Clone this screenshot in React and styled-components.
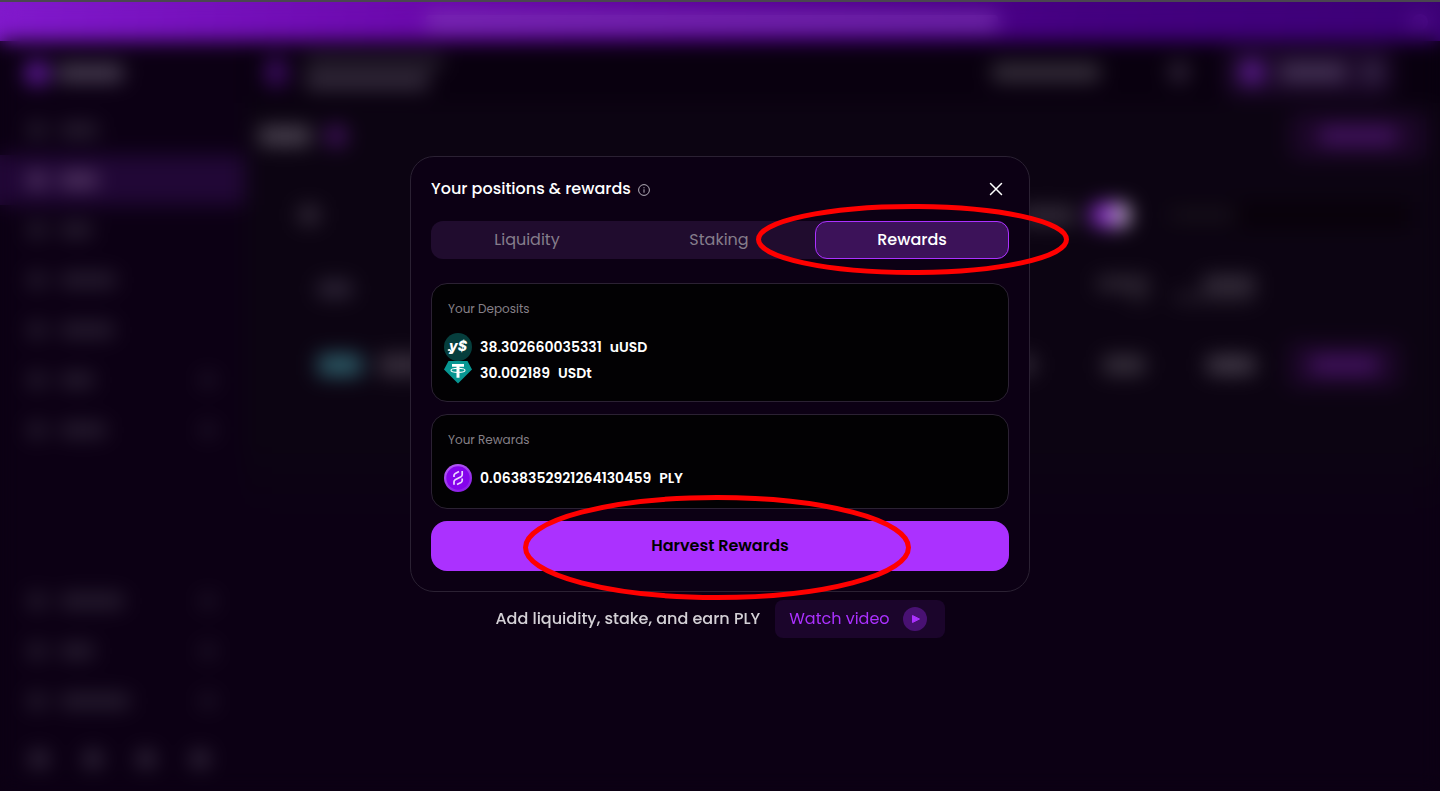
import React from "react";
import styled, { createGlobalStyle, css } from "styled-components";

const GlobalStyle = createGlobalStyle`
  *, *::before, *::after { box-sizing: border-box; }
  body {
    margin: 0;
    background: #0c0014;
    color: #fff;
    font-family: Poppins, Inter, "Liberation Sans", sans-serif;
    font-size: 16px;
    line-height: 24px;
  }
  button { font: inherit; color: inherit; border: 0; padding: 0; background: none; cursor: pointer; }
  h2, h3, p, ul, dl { margin: 0; padding: 0; list-style: none; }
`;

/* ---------- dimmed page behind the dialog ---------- */

const Page = styled.div`
  min-height: 100vh;
  display: flex;
  flex-direction: column;
  border-top: 2px solid #4a4650;
`;

const Banner = styled.div`
  display: flex;
  align-items: center;
  justify-content: center;
  height: 39px;
  padding: 0 12px;
  background: linear-gradient(100deg, #8119cc 0%, #6a08ab 30%, #5a0099 50%, #440080 75%, #3c0076 100%);
`;

const BannerClose = styled.span`
  width: 16px;
  height: 16px;
  border-radius: 50%;
  background: #5a1596;
`;

const Ghost = styled.span`
  flex: none;
  width: ${(p) => p.$w}px;
  height: ${(p) => p.$h || 14}px;
  border-radius: ${(p) => (p.$round ? "50%" : "4px")};
  background: ${(p) => p.$c};
`;

const Columns = styled.div`
  flex: 1;
  display: flex;
`;

const Sidebar = styled.nav`
  width: 245px;
  flex: none;
  display: flex;
  flex-direction: column;
  padding-bottom: 11px;
`;

const Brand = styled.div`
  display: flex;
  align-items: center;
  gap: 8px;
  height: 64px;
  padding-left: 25px;
`;

const NavItem = styled.div`
  display: flex;
  align-items: center;
  gap: 14px;
  height: 50px;
  padding: 0 30px 0 28px;
  ${(p) => p.$active && css`background: #210736;`}
`;

const Spacer = styled.span`
  flex: 1;
`;

const Socials = styled.div`
  display: flex;
  justify-content: space-between;
  padding: 24px 36px 12px 30px;
`;

const Main = styled.div`
  flex: 1;
  min-width: 0;
  display: flex;
  flex-direction: column;
  background: linear-gradient(#0c0412 0, #0c0412 400px, #0c0014 480px);
`;

const TopBar = styled.div`
  display: flex;
  align-items: center;
  height: 62px;
  padding: 0 46px 0 20px;
  background: #09000f;
`;

const PriceLines = styled.div`
  flex: 1;
  display: flex;
  flex-direction: column;
  gap: 6px;
  padding-left: 18px;
`;

const Balance = styled.span`
  display: flex;
  margin-right: 68px;
`;

const Wallet = styled.div`
  display: flex;
  align-items: center;
  gap: 16px;
  height: 50px;
  margin-left: 34px;
  padding: 0 12px 0 16px;
  border-radius: 12px;
  background: #1b0828;
`;

const TitleBar = styled.div`
  display: flex;
  align-items: center;
  gap: 14px;
  height: 66px;
  padding: 0 14px;
`;

const GhostButton = styled.span`
  display: flex;
  align-items: center;
  justify-content: center;
  width: ${(p) => p.$w}px;
  height: 46px;
  border-radius: 8px;
  background: #1b0627;
`;

const FilterBar = styled.div`
  display: flex;
  align-items: center;
  height: 92px;
  padding: 0 30px 0 54px;
`;

const Toggle = styled.span`
  display: flex;
  justify-content: flex-end;
  width: 40px;
  height: 24px;
  margin: 0 40px 0 14px;
  border-radius: 12px;
  background: #8a30c8;
`;

const Knob = styled.span`
  width: 18px;
  height: 24px;
  border-radius: 50%;
  background: #cbb8d8;
`;

const SearchField = styled.span`
  display: flex;
  align-items: center;
  width: 240px;
  height: 26px;
  background: #08010a;
`;

const TableRow = styled.div`
  display: flex;
  align-items: center;
  gap: 16px;
  height: ${(p) => p.$h}px;
  padding: 0 40px 0 73px;
`;

const Cell = styled.span`
  display: flex;
  flex-direction: column;
  align-items: flex-end;
  gap: 2px;
  width: ${(p) => p.$w}px;
`;

/* ---------- dialog ---------- */

const Overlay = styled.div`
  position: fixed;
  inset: 2px 0 0;
  display: flex;
  flex-direction: column;
  align-items: center;
  justify-content: center;
  gap: 8px;
  padding-top: 1px;
  backdrop-filter: blur(10px);
`;

const Dialog = styled.section`
  position: relative;
  width: 100%;
  max-width: 620px;
  padding: 16px 20px 20px;
  border: 1px solid #2b2133;
  border-radius: 24px;
  background: #0c0014;
`;

const DialogHeader = styled.header`
  display: flex;
  align-items: center;
  height: 32px;
  margin-bottom: 16px;
`;

const DialogTitle = styled.h2`
  font-size: 16px;
  line-height: 24px;
  font-weight: 500;
`;

const InfoButton = styled.button`
  display: flex;
  margin: 2px 0 0 7px;
  color: #b3adb8;
`;

const CloseButton = styled.button`
  display: flex;
  align-items: center;
  justify-content: center;
  width: 26px;
  height: 26px;
  margin-left: auto;
`;

const Tabs = styled.div`
  display: flex;
  height: 38px;
  margin-bottom: 24px;
  border-radius: 12px;
  background: #200c2e;
`;

const Tab = styled.button`
  flex: 1;
  border-radius: 12px;
  color: #857d8b;
  ${(p) =>
    p.$active &&
    css`
      color: #fff;
      font-weight: 500;
      background: #3c1259;
      border: 1px solid #ab31ff;
    `}
`;

const Card = styled.section`
  padding: 16px 12px;
  margin-bottom: 12px;
  border: 1px solid #2b2133;
  border-radius: 16px;
  background: #020103;
`;

const CardLabel = styled.h3`
  padding-left: 4px;
  margin-bottom: 15px;
  font-size: 12px;
  line-height: 18px;
  font-weight: 400;
  color: #868088;
`;

const TokenRow = styled.li`
  display: flex;
  align-items: center;
  gap: 8px;
  height: 28px;
  font-size: 14px;
  line-height: 20px;
  font-weight: 600;
  & + & { height: 24px; }
  svg { flex: none; }
`;

const HarvestButton = styled.button`
  display: block;
  width: 100%;
  height: 50px;
  border-radius: 16px;
  background: #ab31ff;
  color: #000;
  font-weight: 600;
`;

const Help = styled.div`
  display: flex;
  align-items: center;
  gap: 15px;
`;

const HelpText = styled.p`
  font-weight: 500;
  color: #d4d0d6;
`;

const WatchButton = styled.button`
  display: flex;
  align-items: center;
  gap: 13px;
  height: 38px;
  padding: 0 18px 0 14px;
  border-radius: 8px;
  background: #1b052b;
  color: #ab31ff;
`;

const Mark = styled.svg`
  position: absolute;
  left: ${(p) => p.$x}px;
  top: ${(p) => p.$y}px;
  pointer-events: none;
`;

/* ---------- drawings ---------- */

function UusdIcon() {
  return (
    <svg width="28" height="28" viewBox="0 0 28 28" aria-hidden="true">
      <circle cx="14" cy="14" r="14" fill="#063e3d" />
      <text x="14" y="18" textAnchor="middle" fontFamily="Inter, sans-serif" fontSize="14" fontWeight="800" fontStyle="italic" fill="#fff">
        y$
      </text>
      <path d="M4 17.500q1.500-1.500 2.500.5t2.500 1.500" fill="none" stroke="#fff" strokeWidth="1.600" />
    </svg>
  );
}

function UsdtIcon() {
  return (
    <svg width="28" height="24" viewBox="0 0 28 24" aria-hidden="true">
      <path d="M4.500 0h19L28 8.500 14 22.500 0 8.500z" fill="#079692" />
      <path d="M8 3h12v2.700h-4.500v11h-3v-11H8z" fill="#fff" />
      <ellipse cx="14" cy="9.300" rx="7" ry="2.100" fill="none" stroke="#fff" strokeWidth="1.100" />
    </svg>
  );
}

function PlyIcon() {
  return (
    <svg width="28" height="28" viewBox="0 0 28 28" aria-hidden="true">
      <defs>
        <linearGradient id="plyRim" x1="0.2" y1="0" x2="0.7" y2="1">
          <stop offset="0" stopColor="#b45cf5" />
          <stop offset="1" stopColor="#8a1ae6" />
        </linearGradient>
      </defs>
      <circle cx="14" cy="14" r="14" fill="url(#plyRim)" />
      <circle cx="14" cy="14" r="11.700" fill="#8503ec" />
      <g fill="none" stroke="#ecd6ff" strokeWidth="1.700">
        <path d="M10 13v-1.500c0-1 .4-1.500 1.300-2L15 7.600" />
        <path d="M18.200 7v3.800c0 1-.3 1.500-1.200 2l-5.800 3c-.9.500-1.200 1-1.200 2v3" />
        <path d="M18.200 14.500v2c0 1-.3 1.500-1.200 2l-4 2.100" />
      </g>
    </svg>
  );
}

function InfoIcon() {
  return (
    <svg width="12" height="12" viewBox="0 0 12 12" fill="none" stroke="currentColor" aria-hidden="true">
      <circle cx="6" cy="6" r="5.400" />
      <path d="M6 5.300v3.400M6 3.200v1.100" />
    </svg>
  );
}

function CloseIcon() {
  return (
    <svg width="14" height="14" viewBox="0 0 14 14" fill="none" stroke="#fff" strokeWidth="1.500" strokeLinecap="round" aria-hidden="true">
      <path d="M1.500 1.500l11 11M12.500 1.500l-11 11" />
    </svg>
  );
}

function PlayIcon() {
  return (
    <svg width="24" height="24" viewBox="0 0 24 24" aria-hidden="true">
      <circle cx="12" cy="12" r="12" fill="#481172" />
      <path d="M9.500 8.500v7l7-3.500z" fill="#ab31ff" stroke="#ab31ff" strokeLinejoin="round" />
    </svg>
  );
}

function Ellipse({ x, y, w, h }) {
  return (
    <Mark $x={x} $y={y} width={w} height={h} aria-hidden="true">
      <ellipse cx={w / 2} cy={h / 2} rx={w / 2 - 2.5} ry={h / 2 - 2.5} fill="none" stroke="#ff0000" strokeWidth="5" />
    </Mark>
  );
}

/* ---------- data ---------- */

const upperNav = [
  { label: 38 },
  { label: 38, active: true },
  { label: 32 },
  { label: 56 },
  { label: 54 },
  { label: 34, more: true },
  { label: 46, more: true },
];
const lowerNav = [
  { label: 64, more: true },
  { label: 34, more: true },
  { label: 70, more: true },
];
const deposits = [
  { amount: "38.302660035331", token: "uUSD", Icon: UusdIcon },
  { amount: "30.002189", token: "USDt", Icon: UsdtIcon },
];
const rewards = [{ amount: "0.0638352921264130459", token: "PLY", Icon: PlyIcon }];

function NavList({ items }) {
  return items.map((item, i) => (
    <NavItem key={i} $active={item.active}>
      <Ghost $w={18} $h={18} $c={item.active ? "#5a3d6a" : "#2a2133"} $round />
      <Ghost $w={item.label} $c={item.active ? "#563a66" : "#2a2033"} />
      <Spacer />
      {item.more && <Ghost $w={14} $h={14} $c="#261c30" $round />}
    </NavItem>
  ));
}

function Backdrop() {
  return (
    <Page aria-hidden="true">
      <Banner>
        <Spacer />
        <Ghost $w={572} $h={13} $c="#7f38b6" />
        <Spacer />
        <BannerClose />
      </Banner>
      <Columns>
        <Sidebar>
          <Brand>
            <Ghost $w={24} $h={24} $c="#641aa2" $round />
            <Ghost $w={66} $h={16} $c="#4d4357" />
          </Brand>
          <NavList items={upperNav} />
          <Spacer />
          <NavList items={lowerNav} />
          <Socials>
            {[0, 1, 2, 3].map((i) => (
              <Ghost key={i} $w={18} $h={18} $c="#3a3044" $round />
            ))}
          </Socials>
        </Sidebar>
        <Main>
          <TopBar>
            <Ghost $w={22} $h={28} $c="#3a0b5e" />
            <PriceLines>
              <Ghost $w={138} $h={12} $c="#2b2332" />
              <Ghost $w={124} $h={15} $c="#3a3142" />
            </PriceLines>
            <Balance>
              <Ghost $w={108} $h={17} $c="#3a333f" />
            </Balance>
            <Ghost $w={22} $h={22} $c="#2f2338" $round />
            <Wallet>
              <Ghost $w={24} $h={24} $c="#5e1b94" $round />
              <Ghost $w={66} $h={16} $c="#49385a" />
              <Ghost $w={20} $h={20} $c="#3a2c4c" $round />
            </Wallet>
          </TopBar>
          <TitleBar>
            <Ghost $w={52} $h={18} $c="#4d4553" />
            <Ghost $w={22} $h={22} $c="#42125f" $round />
            <Spacer />
            <GhostButton $w={136}>
              <Ghost $w={78} $h={18} $c="#42125f" />
            </GhostButton>
          </TitleBar>
          <FilterBar>
            <Ghost $w={20} $h={18} $c="#342b3a" />
            <Spacer />
            <Ghost $w={56} $h={17} $c="#352d3b" />
            <Toggle>
              <Knob />
            </Toggle>
            <SearchField>
              <Ghost $w={66} $c="#18111d" />
            </SearchField>
          </FilterBar>
          <TableRow $h={56}>
            <Ghost $w={34} $h={16} $c="#30273a" />
            <Spacer />
            <Cell $w={90}>
              <Ghost $w={52} $h={13} $c="#332b38" />
              <Ghost $w={20} $h={10} $c="#241d28" />
            </Cell>
            <Cell $w={90}>
              <Ghost $w={52} $h={15} $c="#38303e" />
              <Ghost $w={82} $h={9} $c="#261e2b" />
            </Cell>
            <Cell $w={129} />
          </TableRow>
          <TableRow $h={96}>
            <Ghost $w={44} $h={22} $c="#2c5a66" />
            <Ghost $w={48} $h={22} $c="#372e3c" />
            <Spacer />
            <Ghost $w={20} $h={18} $c="#352d3b" />
            <Cell $w={94}>
              <Ghost $w={42} $h={18} $c="#39323e" />
            </Cell>
            <Cell $w={94}>
              <Ghost $w={48} $h={18} $c="#443c4a" />
            </Cell>
            <Cell $w={129}>
              <GhostButton $w={112}>
                <Ghost $w={68} $h={18} $c="#42125f" />
              </GhostButton>
            </Cell>
          </TableRow>
        </Main>
      </Columns>
    </Page>
  );
}

function TokenCard({ title, rows }) {
  return (
    <Card>
      <CardLabel>{title}</CardLabel>
      <ul>
        {rows.map(({ amount, token, Icon }) => (
          <TokenRow key={token}>
            <Icon />
            <span>{amount}</span>
            <span>{token}</span>
          </TokenRow>
        ))}
      </ul>
    </Card>
  );
}

export default function App() {
  return (
    <>
      <GlobalStyle />
      <Backdrop />
      <Overlay>
        <Dialog role="dialog" aria-labelledby="dialog-title">
          <DialogHeader>
            <DialogTitle id="dialog-title">Your positions &amp; rewards</DialogTitle>
            <InfoButton type="button" aria-label="About positions and rewards">
              <InfoIcon />
            </InfoButton>
            <CloseButton type="button" aria-label="Close">
              <CloseIcon />
            </CloseButton>
          </DialogHeader>
          <Tabs role="tablist">
            <Tab type="button" role="tab" aria-selected="false">Liquidity</Tab>
            <Tab type="button" role="tab" aria-selected="false">Staking</Tab>
            <Tab type="button" role="tab" aria-selected="true" $active>Rewards</Tab>
          </Tabs>
          <TokenCard title="Your Deposits" rows={deposits} />
          <TokenCard title="Your Rewards" rows={rewards} />
          <HarvestButton type="button">Harvest Rewards</HarvestButton>
          <Ellipse x={345} y={47} w={313} h={71} />
          <Ellipse x={112} y={338} w={388} h={105} />
        </Dialog>
        <Help>
          <HelpText>Add liquidity, stake, and earn PLY</HelpText>
          <WatchButton type="button">
            Watch video
            <PlayIcon />
          </WatchButton>
        </Help>
      </Overlay>
    </>
  );
}
